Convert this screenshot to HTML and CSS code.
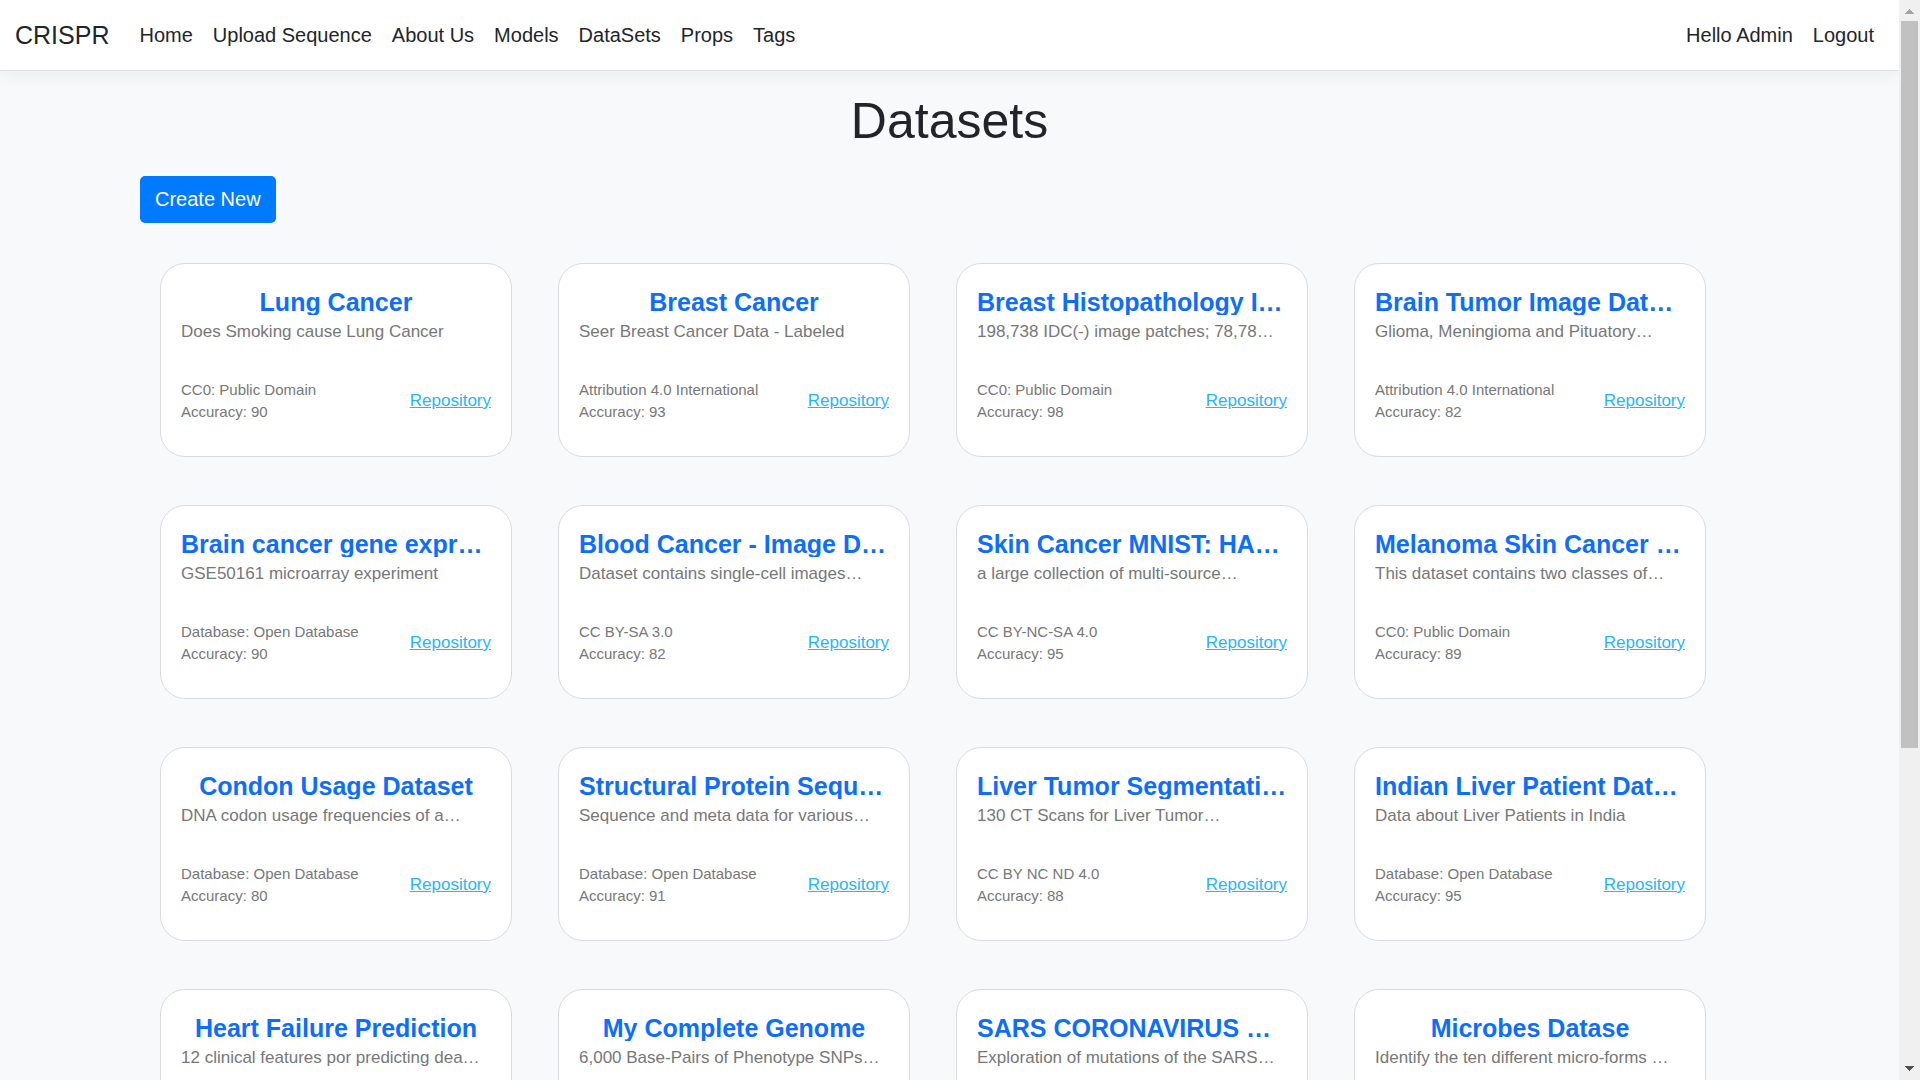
FILE: index.html
```html
<!DOCTYPE html>
<html lang="en">
<head>
<meta charset="utf-8">
<meta name="viewport" content="width=device-width, initial-scale=1">
<title>Datasets - CRISPR</title>
<link rel="stylesheet" href="styles.css">
</head>
<body>
<div class="page">
  <header class="navbar">
    <a class="brand" href="#">CRISPR</a>
    <nav class="nav-links" aria-label="Main">
      <a href="#">Home</a>
      <a href="#">Upload Sequence</a>
      <a href="#">About Us</a>
      <a href="#">Models</a>
      <a href="#">DataSets</a>
      <a href="#">Props</a>
      <a href="#">Tags</a>
    </nav>
    <nav class="nav-links" aria-label="Account">
      <a href="#">Hello Admin</a>
      <a href="#">Logout</a>
    </nav>
  </header>
  <main class="content">
    <h1 class="heading">Datasets</h1>
    <button class="create" type="button">Create New</button>
    <div class="cards">
      <article class="card">
        <h2 class="title">Lung Cancer</h2>
        <p class="desc">Does Smoking cause Lung Cancer</p>
        <div class="foot"><p class="meta">CC0: Public Domain<br>Accuracy: 90</p><a class="repo" href="#">Repository</a></div>
      </article>
      <article class="card">
        <h2 class="title">Breast Cancer</h2>
        <p class="desc">Seer Breast Cancer Data - Labeled</p>
        <div class="foot"><p class="meta">Attribution 4.0 International<br>Accuracy: 93</p><a class="repo" href="#">Repository</a></div>
      </article>
      <article class="card">
        <h2 class="title long">Breast Histopathology I…</h2>
        <p class="desc">198,738 IDC(-) image patches; 78,78…</p>
        <div class="foot"><p class="meta">CC0: Public Domain<br>Accuracy: 98</p><a class="repo" href="#">Repository</a></div>
      </article>
      <article class="card">
        <h2 class="title long">Brain Tumor Image Dat…</h2>
        <p class="desc">Glioma, Meningioma and Pituatory…</p>
        <div class="foot"><p class="meta">Attribution 4.0 International<br>Accuracy: 82</p><a class="repo" href="#">Repository</a></div>
      </article>
      <article class="card">
        <h2 class="title long">Brain cancer gene expr…</h2>
        <p class="desc">GSE50161 microarray experiment</p>
        <div class="foot"><p class="meta">Database: Open Database<br>Accuracy: 90</p><a class="repo" href="#">Repository</a></div>
      </article>
      <article class="card">
        <h2 class="title long">Blood Cancer - Image D…</h2>
        <p class="desc">Dataset contains single-cell images…</p>
        <div class="foot"><p class="meta">CC BY-SA 3.0<br>Accuracy: 82</p><a class="repo" href="#">Repository</a></div>
      </article>
      <article class="card">
        <h2 class="title long">Skin Cancer MNIST: HA…</h2>
        <p class="desc">a large collection of multi-source…</p>
        <div class="foot"><p class="meta">CC BY-NC-SA 4.0<br>Accuracy: 95</p><a class="repo" href="#">Repository</a></div>
      </article>
      <article class="card">
        <h2 class="title long">Melanoma Skin Cancer …</h2>
        <p class="desc">This dataset contains two classes of…</p>
        <div class="foot"><p class="meta">CC0: Public Domain<br>Accuracy: 89</p><a class="repo" href="#">Repository</a></div>
      </article>
      <article class="card">
        <h2 class="title">Condon Usage Dataset</h2>
        <p class="desc">DNA codon usage frequencies of a…</p>
        <div class="foot"><p class="meta">Database: Open Database<br>Accuracy: 80</p><a class="repo" href="#">Repository</a></div>
      </article>
      <article class="card">
        <h2 class="title long">Structural Protein Sequ…</h2>
        <p class="desc">Sequence and meta data for various…</p>
        <div class="foot"><p class="meta">Database: Open Database<br>Accuracy: 91</p><a class="repo" href="#">Repository</a></div>
      </article>
      <article class="card">
        <h2 class="title long">Liver Tumor Segmentati…</h2>
        <p class="desc">130 CT Scans for Liver Tumor…</p>
        <div class="foot"><p class="meta">CC BY NC ND 4.0<br>Accuracy: 88</p><a class="repo" href="#">Repository</a></div>
      </article>
      <article class="card">
        <h2 class="title long">Indian Liver Patient Dat…</h2>
        <p class="desc">Data about Liver Patients in India</p>
        <div class="foot"><p class="meta">Database: Open Database<br>Accuracy: 95</p><a class="repo" href="#">Repository</a></div>
      </article>
      <article class="card">
        <h2 class="title">Heart Failure Prediction</h2>
        <p class="desc">12 clinical features por predicting dea…</p>
      </article>
      <article class="card">
        <h2 class="title">My Complete Genome</h2>
        <p class="desc">6,000 Base-Pairs of Phenotype SNPs…</p>
      </article>
      <article class="card">
        <h2 class="title long">SARS CORONAVIRUS …</h2>
        <p class="desc">Exploration of mutations of the SARS…</p>
      </article>
      <article class="card">
        <h2 class="title">Microbes Datase</h2>
        <p class="desc">Identify the ten different micro-forms …</p>
      </article>
    </div>
  </main>
</div>
<div class="scrollbar" aria-hidden="true">
  <svg class="arrow up" viewBox="0 0 21 21"><path d="M10 9h1v1h1v1h1v1h1v1h1v1H6v-1h1v-1h1v-1h1v-1h1z"/></svg>
  <div class="track"><div class="thumb"></div></div>
  <svg class="arrow down" viewBox="0 0 21 21"><path d="M6 7h9v1h-1v1h-1v1h-1v1h-1v1h-1v-1H9v-1H8V9H7V8H6z"/></svg>
</div>
</body>
</html>
```
FILE: styles.css
```css
* {
  box-sizing: border-box;
}

body {
  display: flex;
  height: 100vh;
  margin: 0;
  background: #f8f9fb;
  color: #212529;
  font-family: "Liberation Sans", Arial, sans-serif;
  font-size: 20px;
  line-height: 30px;
}

h1,
h2,
p {
  margin: 0;
}

.page {
  flex: 1;
  min-width: 0;
  overflow-y: auto;
  scrollbar-width: none;
}

/* Top bar */
.navbar {
  display: flex;
  align-items: center;
  padding: 20px 25px 20px 15px;
  background: #fff;
  border-bottom: 1px solid #dee2e6;
  box-shadow: 0 5px 15px rgba(0, 0, 0, 0.05);
}

.navbar a {
  color: #212529;
  text-decoration: none;
}

.navbar .brand {
  margin-right: 30px;
  font-size: 25px;
  line-height: 28px;
}

.nav-links {
  display: flex;
  flex-wrap: wrap;
  gap: 0 20px;
}

.nav-links:last-child {
  margin-left: auto;
}

/* Main column */
.content {
  padding: 20px 140px 48px;
}

.heading {
  margin-bottom: 25px;
  font-size: 50px;
  font-weight: 400;
  line-height: 60px;
  text-align: center;
}

.create {
  display: block;
  padding: 8px 15px;
  border: 0;
  border-radius: 5px;
  background: #007bff;
  color: #fff;
  font: inherit;
  line-height: 31px;
}

.cards {
  display: grid;
  grid-template-columns: repeat(4, minmax(0, 1fr));
  gap: 48px 46px;
  margin-top: 40px;
  padding: 0 53px 0 20px;
}

/* Dataset card */
.card {
  min-height: 194px;
  padding: 26px 20px 30px;
  border: 1px solid #d9dbdf;
  border-radius: 25px;
  background: #fff;
}

.title {
  overflow: hidden;
  color: #0d6efd;
  font-size: 25px;
  font-weight: 700;
  line-height: 25px;
  text-align: center;
  text-overflow: ellipsis;
  white-space: nowrap;
}

.title.long {
  text-align: left;
}

.desc {
  min-height: 60px;
  margin-top: 4px;
  color: #777;
  font-size: 17px;
  line-height: 26px;
}

.foot {
  display: flex;
  align-items: center;
  justify-content: space-between;
}

.meta {
  color: #777;
  font-size: 15px;
  line-height: 22px;
}

.repo {
  color: #1fb6ff;
  font-size: 17px;
}

/* Scroll bar strip */
.scrollbar {
  display: flex;
  flex-direction: column;
  width: 21px;
  background: #f0f0f0;
}

.arrow {
  width: 21px;
  height: 21px;
}

.up {
  fill: #a3a3a3;
}

.down {
  fill: #505050;
}

.track {
  flex: 1;
  padding: 0 2px;
}

.thumb {
  height: 70%;
  background: #c1c1c1;
}

@media (max-width: 1500px) {
  .content {
    padding-right: 40px;
    padding-left: 40px;
  }

  .cards {
    grid-template-columns: repeat(auto-fill, minmax(340px, 1fr));
    padding: 0;
  }
}
```
